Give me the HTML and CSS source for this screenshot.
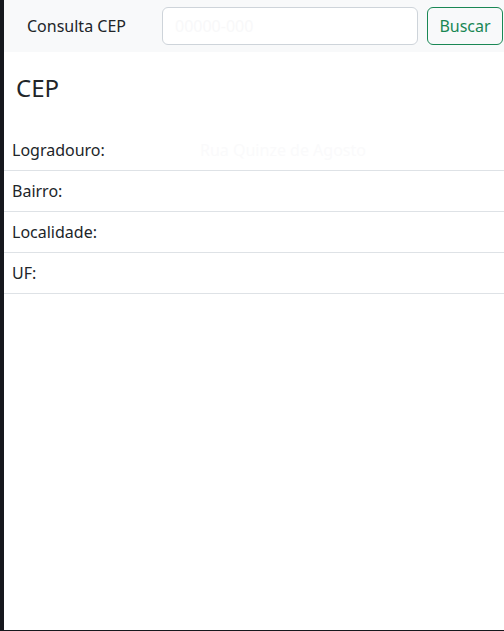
FILE: index.html
```html
<!DOCTYPE html>
<html lang="pt-BR">
<head>
<meta charset="utf-8">
<title>Consulta CEP</title>
<link rel="stylesheet" href="styles.css">
</head>
<body>
<div class="frame">
  <nav class="navbar">
    <span class="brand">Consulta CEP</span>
    <form class="search">
      <input class="field" type="text" placeholder="00000-000">
      <button class="btn" type="button">Buscar</button>
    </form>
  </nav>
  <h1 class="title">CEP</h1>
  <table class="table">
    <tr><td><span class="label">Logradouro:</span><span class="value">Rua Quinze de Agosto</span></td></tr>
    <tr><td><span class="label">Bairro:</span></td></tr>
    <tr><td><span class="label">Localidade:</span></td></tr>
    <tr><td><span class="label">UF:</span></td></tr>
  </table>
</div>
</body>
</html>
```
FILE: styles.css
```css
html, body {
  margin: 0;
  padding: 0;
  height: 100%;
}
body {
  background: #16181d;
  font-family: "Noto Sans", "Open Sans", sans-serif;
  color: #212529;
}
.frame {
  box-sizing: border-box;
  margin-left: 4px;
  height: 630px;
  background: #fff;
  overflow: hidden;
}
.navbar {
  display: flex;
  align-items: center;
  justify-content: space-between;
  height: 52px;
  background: #f8f9fa;
  padding: 0 1px 0 23px;
  box-sizing: border-box;
}
.brand {
  font-size: 16px;
  line-height: 24px;
  color: #212529;
}
.search {
  display: flex;
  gap: 9px;
  margin: 0;
}
.field {
  box-sizing: border-box;
  width: 256px;
  height: 38px;
  border: 1px solid #ced4da;
  border-radius: 6px;
  background: #fff;
  padding: 6px 12px;
  font: 16px "Noto Sans", sans-serif;
}
.field::placeholder {
  color: #f8f8f9;
}
.btn {
  box-sizing: border-box;
  height: 38px;
  width: 76px;
  border: 1px solid #198754;
  border-radius: 6px;
  background: transparent;
  color: #198754;
  font: 16px "Noto Sans", sans-serif;
  padding: 0;
}
.title {
  font-size: 24px;
  font-weight: 400;
  line-height: 30px;
  margin: 0;
  padding: 21px 0 0 12px;
  height: 57px;
  box-sizing: border-box;
}
.table {
  width: 100%;
  border-collapse: collapse;
  margin-top: 21px;
}
.table td {
  padding: 8px 8px;
  font-size: 16px;
  line-height: 24px;
  border-bottom: 1px solid #dee2e6;
}
.label {
  display: inline-block;
  width: 188px;
}
.value {
  color: #fafafb;
}
```
